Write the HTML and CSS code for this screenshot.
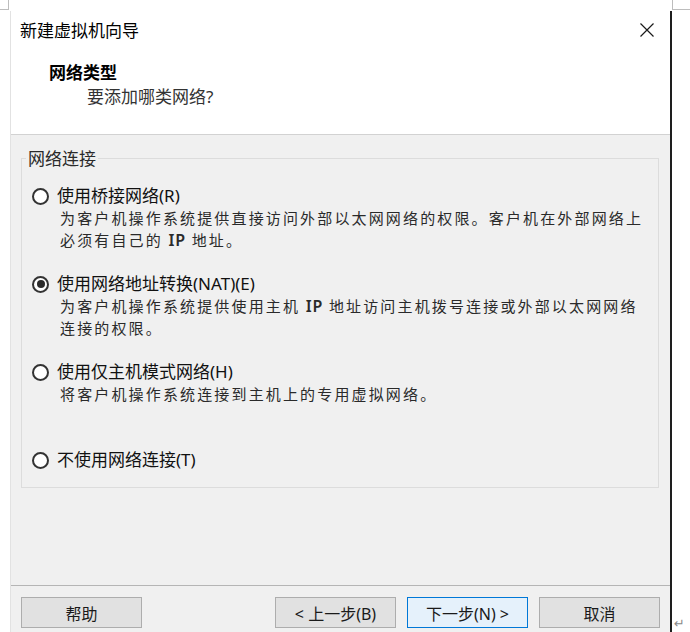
FILE: index.html
```html
<!DOCTYPE html>
<html lang="zh-CN">
<head>
<meta charset="utf-8">
<title>新建虚拟机向导</title>
<link rel="stylesheet" href="styles.css">
</head>
<body>
<div class="mark mark-tl"></div>
<div class="mark mark-tr"></div>
<div class="page">
  <div class="dialog">
    <header class="header">
      <div class="title-row">
        <span class="title">新建虚拟机向导</span>
        <svg class="close" width="16" height="16" viewBox="0 0 16 16"><path d="M1.5 1.5L14.5 14.5M14.5 1.5L1.5 14.5" stroke="#1a1a1a" stroke-width="1.2" fill="none"/></svg>
      </div>
      <div class="heading">网络类型</div>
      <div class="subheading">要添加哪类网络?</div>
    </header>
    <main class="body">
      <fieldset class="group">
        <legend class="legend">网络连接</legend>
        <div class="option">
          <div class="option-row"><span class="radio"></span><span class="label">使用桥接网络(R)</span></div>
          <div class="desc">为客户机操作系统提供直接访问外部以太网网络的权限。客户机在外部网络上</div>
          <div class="desc">必须有自己的 <span class="latin">IP</span> 地址。</div>
        </div>
        <div class="option">
          <div class="option-row"><span class="radio checked"></span><span class="label">使用网络地址转换(NAT)(E)</span></div>
          <div class="desc">为客户机操作系统提供使用主机 <span class="latin">IP</span> 地址访问主机拨号连接或外部以太网网络</div>
          <div class="desc">连接的权限。</div>
        </div>
        <div class="option">
          <div class="option-row"><span class="radio"></span><span class="label">使用仅主机模式网络(H)</span></div>
          <div class="desc">将客户机操作系统连接到主机上的专用虚拟网络。</div>
        </div>
        <div class="option last">
          <div class="option-row"><span class="radio"></span><span class="label">不使用网络连接(T)</span></div>
        </div>
      </fieldset>
    </main>
    <footer class="footer">
      <button class="btn">帮助</button>
      <div class="spacer"></div>
      <button class="btn">&lt; 上一步(B)</button>
      <button class="btn primary">下一步(N) &gt;</button>
      <button class="btn">取消</button>
    </footer>
  </div>
</div>
<div class="return-mark">↵</div>
</body>
</html>
```
FILE: styles.css
```css
html, body {
  margin: 0;
  padding: 0;
  background: #ffffff;
  width: 690px;
  height: 632px;
  overflow: hidden;
  font-family: "Noto Sans", "Noto Sans CJK SC", sans-serif;
}

body {
  position: relative;
}

.mark {
  position: absolute;
  top: 0;
  height: 9px;
  border-bottom: 1px solid #bdbdbd;
}

.mark-tl {
  left: 0;
  width: 8px;
  border-right: 1px solid #bdbdbd;
}

.mark-tr {
  left: 672px;
  width: 18px;
  border-left: 1px solid #bdbdbd;
}

.page {
  padding: 11px 0 0 10px;
}

.dialog {
  width: 659px;
  height: 621px;
  border-left: 1px solid #e2e2e2;
  border-right: 2px solid #1e1e1e;
  display: flex;
  flex-direction: column;
  overflow: hidden;
}

.header {
  background: #ffffff;
  border-bottom: 1px solid #d2d2d2;
  padding: 8px 0 0 9px;
  box-sizing: border-box;
  height: 124px;
  flex: none;
}

.title-row {
  display: flex;
  align-items: center;
  justify-content: space-between;
  height: 22px;
  padding-right: 15px;
}

.title {
  font-family: "Noto Sans CJK SC", sans-serif;
  font-size: 17px;
  line-height: 22px;
  color: #000;
}

.close {
  display: block;
}

.heading {
  margin: 20px 0 0 29px;
  font-family: "Noto Sans CJK SC", sans-serif;
  font-size: 17px;
  font-weight: bold;
  line-height: 22px;
  color: #000;
}

.subheading {
  margin: 3px 0 0 67px;
  font-family: "Noto Sans", "Noto Sans CJK SC", sans-serif;
  font-size: 17px;
  line-height: 22px;
  color: #333;
}

.body {
  flex: 1;
  background: #f0f0f0;
  padding-top: 12px;
}

.group {
  margin: 0 11px 0 10px;
  padding: 16px 0 16px 0;
  border: 1px solid #dcdcdc;
}

.legend {
  margin-left: 4px;
  padding: 0 2px;
  font-family: "Noto Sans CJK SC", sans-serif;
  font-size: 17px;
  line-height: 22px;
  color: #2a2a2a;
}

.option {
  height: 88px;
  padding-left: 10px;
}

.option.last {
  height: auto;
}

.option-row {
  display: flex;
  align-items: center;
  height: 22px;
}

.radio {
  width: 17px;
  height: 17px;
  box-sizing: border-box;
  border: 2px solid #333333;
  border-radius: 50%;
  background: #ffffff;
  display: flex;
  align-items: center;
  justify-content: center;
  flex: none;
}

.radio.checked::after {
  content: "";
  width: 8px;
  height: 8px;
  border-radius: 50%;
  background: #2b2b2b;
}

.label {
  margin-left: 8px;
  font-size: 17px;
  line-height: 22px;
  color: #111;
}

.desc {
  height: 22px;
  padding-left: 28px;
  font-family: "Noto Sans CJK SC", sans-serif;
  font-size: 15px;
  line-height: 22px;
  letter-spacing: 2.15px;
  color: #2a2a2a;
  white-space: nowrap;
}

.latin {
  font-family: "Noto Sans", sans-serif;
  font-size: 16px;
  font-weight: 600;
  letter-spacing: 1px;
}

.footer {
  flex: none;
  height: 47px;
  box-sizing: border-box;
  border-top: 1px solid #b5b5b5;
  background: #f0f0f0;
  padding: 11px 10px 0 10px;
  display: flex;
  gap: 11px;
}

.spacer {
  flex: 1;
}

.btn {
  width: 121px;
  height: 31px;
  box-sizing: border-box;
  border: 1px solid #adadad;
  background: #e1e1e1;
  font-family: "Noto Sans", "Noto Sans CJK SC", sans-serif;
  font-size: 16px;
  color: #1a1a1a;
  padding: 0;
  margin: 0;
}

.btn.primary {
  background: #e5f1fb;
  border-color: #0078d7;
}

.return-mark {
  position: absolute;
  left: 674px;
  top: 616px;
  font-family: "DejaVu Sans", sans-serif;
  font-size: 13px;
  line-height: 16px;
  color: #8a8a8a;
}
```
